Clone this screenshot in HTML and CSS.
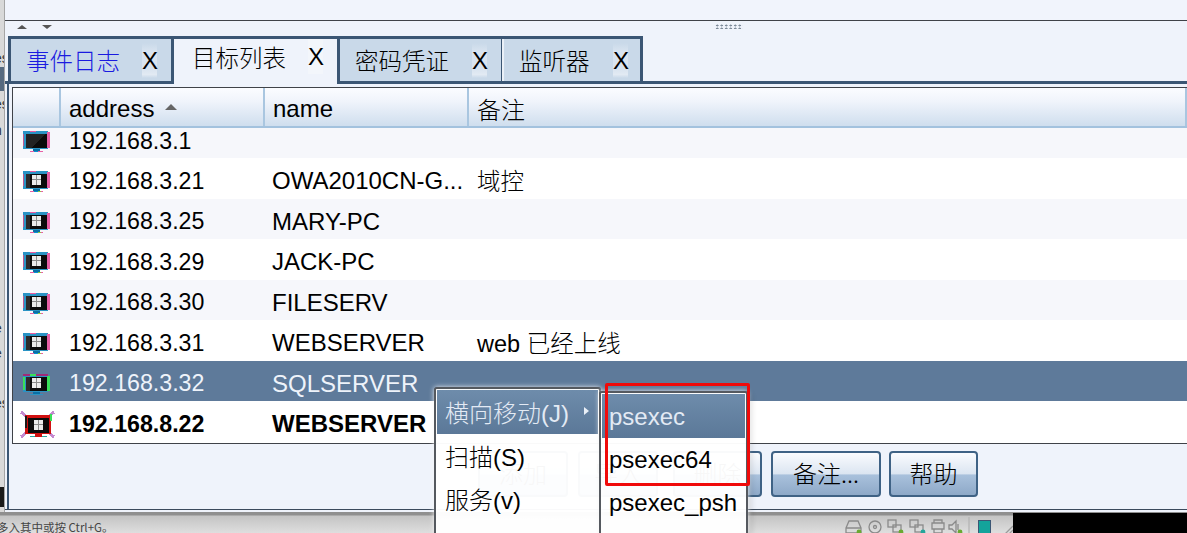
FILE: index.html
```html
<!DOCTYPE html>
<html lang="zh">
<head>
<meta charset="utf-8">
<title>目标列表</title>
<link rel="stylesheet" href="styles.css">
</head>
<body>
<svg class="defs" width="0" height="0" aria-hidden="true">
  <symbol id="pc" viewBox="0 0 28 22" shape-rendering="crispEdges">
    <rect x="0" y="0" width="25" height="18" fill="#2a93c4"/>
    <rect x="7" y="0" width="6" height="1" fill="#ea5aa0"/>
    <rect x="0" y="3" width="1" height="12" fill="#c0588f"/>
    <rect x="24" y="1" width="3" height="16" fill="#e85fa5"/>
    <rect x="3" y="3" width="21" height="14" fill="#0b0b0b"/>
    <rect x="3" y="3" width="4" height="14" fill="#2c2c2c"/>
    <rect x="9" y="4" width="9" height="10" fill="#ebebeb"/>
    <path d="M13 4h1v10h-1zM9 8h9v1H9z" fill="#8a8a8a"/>
    <rect x="10" y="18" width="7" height="2" fill="#0a6fa5"/>
    <rect x="7" y="20" width="13" height="1" fill="#e85fa5"/>
    <rect x="11" y="20" width="4" height="1" fill="#0a8fd0"/>
    <rect x="15" y="20" width="3" height="1" fill="#8fd03a"/>
  </symbol>
  <symbol id="pc-off" viewBox="0 0 28 22" shape-rendering="crispEdges">
    <rect x="0" y="0" width="25" height="18" fill="#2a93c4"/>
    <rect x="7" y="0" width="6" height="1" fill="#ea5aa0"/>
    <rect x="0" y="3" width="1" height="12" fill="#c0588f"/>
    <rect x="24" y="1" width="3" height="16" fill="#e85fa5"/>
    <rect x="3" y="3" width="21" height="14" fill="#0b0b0b"/>
    <path d="M8 17L24 3V17Z" fill="#0b0b0b"/>
    <path d="M3 3H22L8 17H3Z" fill="#222"/>
    <rect x="10" y="18" width="7" height="2" fill="#0a6fa5"/>
    <rect x="7" y="20" width="13" height="1" fill="#e85fa5"/>
    <rect x="11" y="20" width="4" height="1" fill="#0a8fd0"/>
  </symbol>
  <symbol id="pc-sel" viewBox="0 0 28 22" shape-rendering="crispEdges">
    <rect x="0" y="0" width="25" height="18" fill="#2a93c4"/>
    <rect x="0" y="0" width="7" height="2" fill="#a02a78"/>
    <rect x="7" y="0" width="6" height="2" fill="#39e05a"/>
    <rect x="13" y="0" width="12" height="2" fill="#a02a78"/>
    <rect x="0" y="3" width="2" height="13" fill="#39e05a"/>
    <rect x="24" y="2" width="3" height="15" fill="#39e05a"/>
    <rect x="3" y="3" width="21" height="14" fill="#0b0b0b"/>
    <rect x="3" y="3" width="4" height="14" fill="#2c2c2c"/>
    <rect x="9" y="4" width="9" height="10" fill="#ebebeb"/>
    <path d="M13 4h1v10h-1zM9 8h9v1H9z" fill="#8a8a8a"/>
    <rect x="10" y="18" width="7" height="2" fill="#0a6fa5"/>
    <rect x="7" y="20" width="13" height="1" fill="#2a93c4"/>
  </symbol>
  <symbol id="pc-dead" viewBox="0 0 35 27" shape-rendering="crispEdges">
    <path d="M1 1l7 6M34 1l-7 6M1 26l7-6M34 26l-7-6" stroke="#c58ad0" stroke-width="3"/>
    <rect x="5" y="4" width="26" height="19" fill="#d11010"/>
    <rect x="5" y="5" width="2" height="12" fill="#1a1a1a"/>
    <rect x="30" y="3" width="2" height="7" fill="#39e05a"/>
    <rect x="8" y="7" width="21" height="15" fill="#0b0b0b"/>
    <rect x="14" y="9" width="9" height="10" fill="#ebebeb"/>
    <path d="M18 9h1v10h-1zM14 13h9v1h-9z" fill="#8a8a8a"/>
    <rect x="15" y="22" width="7" height="3" fill="#d11010"/>
    <rect x="10" y="25" width="17" height="1" fill="#25a59a"/>
    <rect x="15" y="25" width="7" height="1" fill="#d11010"/>
  </symbol>
</svg>

<div class="screen">
  <aside class="backdrop-strip">
    <span class="strip-note s1">es</span>
    <span class="strip-sel"></span>
    <span class="strip-note s2">es</span>
    <span class="strip-note s3">n</span>
    <span class="strip-note s4">-</span>
    <span class="strip-note s5">e</span>
    <span class="strip-note s6">e</span>
    <span class="strip-note s7">es</span>
    <span class="strip-dark"></span>
  </aside>

  <main class="window">
    <div class="toolbar-band"></div>
    <div class="split-bar">
      <span class="arrow up"></span>
      <span class="arrow down"></span>
      <span class="grip"></span>
    </div>

    <div class="tabs">
      <div class="tab event"><span class="tab-label">事件日志</span><span class="tab-x">X</span></div>
      <div class="tab active"><span class="tab-label">目标列表</span><span class="tab-x">X</span></div>
      <div class="tab third"><span class="tab-label">密码凭证</span><span class="tab-x">X</span></div>
      <div class="tab last"><span class="tab-label">监听器</span><span class="tab-x">X</span></div>
    </div>

    <div class="pane">
      <div class="table">
        <div class="row head">
          <div class="c-icon"></div>
          <div class="c-addr">address<span class="sort"></span></div>
          <div class="c-name">name</div>
          <div class="c-note">备注</div>
        </div>
        <div class="row first alt">
          <div class="c-icon"><svg class="pc"><use href="#pc-off"/></svg></div>
          <div class="c-addr">192.168.3.1</div><div class="c-name"></div><div class="c-note"></div>
        </div>
        <div class="row">
          <div class="c-icon"><svg class="pc"><use href="#pc"/></svg></div>
          <div class="c-addr">192.168.3.21</div><div class="c-name">OWA2010CN-G...</div><div class="c-note">域控</div>
        </div>
        <div class="row alt">
          <div class="c-icon"><svg class="pc"><use href="#pc"/></svg></div>
          <div class="c-addr">192.168.3.25</div><div class="c-name">MARY-PC</div><div class="c-note"></div>
        </div>
        <div class="row">
          <div class="c-icon"><svg class="pc"><use href="#pc"/></svg></div>
          <div class="c-addr">192.168.3.29</div><div class="c-name">JACK-PC</div><div class="c-note"></div>
        </div>
        <div class="row alt">
          <div class="c-icon"><svg class="pc"><use href="#pc"/></svg></div>
          <div class="c-addr">192.168.3.30</div><div class="c-name">FILESERV</div><div class="c-note"></div>
        </div>
        <div class="row">
          <div class="c-icon"><svg class="pc"><use href="#pc"/></svg></div>
          <div class="c-addr">192.168.3.31</div><div class="c-name">WEBSERVER</div><div class="c-note">web 已经上线</div>
        </div>
        <div class="row selected">
          <div class="c-icon"><svg class="pc"><use href="#pc-sel"/></svg></div>
          <div class="c-addr">192.168.3.32</div><div class="c-name">SQLSERVER</div><div class="c-note"></div>
        </div>
        <div class="row bold">
          <div class="c-icon"><svg class="pc-dead"><use href="#pc-dead"/></svg></div>
          <div class="c-addr">192.168.8.22</div><div class="c-name">WEBSERVER</div><div class="c-note"></div>
        </div>
      </div>
      <div class="buttons">
        <button class="btn b-add">添加</button>
        <button class="btn b-imp">导入</button>
        <button class="btn b-del">删除</button>
        <button class="btn b-note">备注...</button>
        <button class="btn b-help">帮助</button>
      </div>
    </div>
  </main>

  <footer class="statusbar">
    <span class="status-text">多入其中或按 Ctrl+G。</span>
    <span class="tray">
      <svg class="tray-icons" width="170" height="21" viewBox="0 0 170 21" fill="none" stroke="#8a8a8a" stroke-width="1.3">
        <path d="M1 13l3-7h9l3 7v5H1zM1 13h15"/><circle cx="14" cy="17" r="2.4" fill="#6aa832" stroke="none"/>
        <circle cx="30" cy="12" r="6"/><circle cx="30" cy="12" r="1.5"/>
        <rect x="43" y="5" width="8" height="7"/><rect x="48" y="10" width="8" height="7"/><circle cx="56" cy="17" r="2.4" fill="#6aa832" stroke="none"/>
        <rect x="65" y="5" width="8" height="7"/><rect x="70" y="10" width="8" height="7"/><circle cx="78" cy="17" r="2.4" fill="#25a59a" stroke="none"/>
        <path d="M89 8V5h8v3M87 8h12v6H87zM89 14h8v4h-8z"/>
        <path d="M104 10h3l4-4v12l-4-4h-3zM113 9v6"/><circle cx="115" cy="17" r="2.4" fill="#6aa832" stroke="none"/>
        <path d="M124 2v19" stroke="#b4b4b4"/>
        <path d="M160 19l8-8M164 19l4-4" stroke="#9a9a9a"/>
      </svg>
      <span class="note-icon"></span>
    </span>
    <span class="black-end"></span>
  </footer>

  <div class="menu">
    <div class="menu-item on">横向移动(J)<span class="caret"></span></div>
    <div class="menu-item">扫描(S)</div>
    <div class="menu-item">服务(v)</div>
    <div class="menu-sep"></div>
  </div>
  <div class="menu sub">
    <div class="menu-item on">psexec</div>
    <div class="menu-item">psexec64</div>
    <div class="menu-item">psexec_psh</div>
  </div>
  <div class="redbox"></div>
</div>
</body>
</html>
```

FILE: styles.css
```css
* { box-sizing: border-box; }
html, body { margin: 0; padding: 0; height: 100%; overflow: hidden; }
body { font-family: "Liberation Sans", "Noto Sans CJK SC", sans-serif; color: #000; background: #a9a9a9; }
.defs { position: absolute; }

.screen { position: relative; width: 1187px; height: 533px; display: grid; grid-template-columns: 5px 1fr; grid-template-rows: 512px 21px; overflow: hidden; }

.backdrop-strip { position: relative; background: #d9d9d9; border-right: 1px solid #a5a5a5; overflow: hidden; font-size: 14px; color: #333; grid-row: 1; }
.strip-sel { position: absolute; left: 0; top: 67px; width: 5px; height: 24px; background: #56697f; }
.strip-note { position: absolute; left: -6px; }
.s1 { top: 50px; } .s2 { top: 96px; } .s3 { top: 122px; } .s4 { top: 145px; }
.s5 { top: 320px; } .s6 { top: 345px; } .s7 { top: 395px; }
.strip-dark { position: absolute; left: 0; top: 487px; width: 4px; height: 20px; background: #1a1a1a; }

.window { background: #eff3fb; display: flex; flex-direction: column; height: 512px; }
.toolbar-band { height: 20px; flex: none; background: #f1f4fc; }
.split-bar { height: 16px; flex: none; border-top: 1px solid #3f4248; position: relative; display: flex; gap: 15px; padding: 4px 0 0 12px; }
.arrow { width: 0; height: 0; border-left: 5px solid transparent; border-right: 5px solid transparent; }
.arrow.up { border-bottom: 4px solid #555; }
.arrow.down { border-top: 4px solid #555; }
.grip { position: absolute; left: 710px; top: 3px; width: 28px; height: 5px; background-image: radial-gradient(#7d8a99 45%, transparent 50%); background-size: 4.5px 3px; }

.tabs { display: flex; height: 48px; flex: none; padding-left: 3px; align-items: flex-start; border-bottom: 3px solid #3b5674; }
.tab { height: 45px; display: flex; align-items: center; font-size: 23.5px; background: #c9d9e9; border-top: 3px solid #3b5674; border-left: 3px solid #3b5674; border-right: 2px solid #3b5674; padding: 0 0 0 15px; }
.tab.event { width: 166px; color: #1a1ae0; border-right: 3px solid #3b5674; }
.tab.active { height: 48px; background: #eff3fb; border-left: 0; width: 163px; padding: 0 0 10px 18px; border-right: 0; }
.tab.third { width: 165px; border-right: 1px solid #3b5674; }
.tab.last { width: 141px; border-left: 0; border-right: 3px solid #3b5674; padding-left: 17px; box-shadow: inset 2px 0 #eaf0f7; }
.tab-label { font-weight: 300; white-space: nowrap; width: 116px; flex: none; }
.tab.third .tab-label { width: 117px; }
.tab.last .tab-label { width: 94px; }
.tab-x { font-size: 24px; width: 15px; height: 35px; line-height: 35px; text-align: center; flex: none; color: #000; background: linear-gradient(#c9d9e9, #d9e4f0 25%, #d9e4f0 75%, #e2eaf3 90%, #c9d9e9); }
.tab.active .tab-x { background: #f3f6fb; }

.pane { flex: none; height: 426px; padding: 3px 0 0 7px; display: flex; flex-direction: column; border-bottom: 1px solid #3b4a5c; position: relative; }
.pane::before { content: ""; position: absolute; left: 2px; top: -3px; bottom: 0; width: 2px; background: #3b5674; }

.table { height: 357px; flex: none; border: 1px solid #3f4248; border-right: 0; background: #fff; overflow: hidden; font-size: 23.5px; }
.row { display: grid; grid-template-columns: 48px 204px 204px 1fr; height: 40.5px; align-items: center; background: #fff; }
.row > div { padding-top: 6px; }
.row > .c-note { padding-top: 3px; }
.row.alt { background: #f6f7fb; }
.row.head { height: 40px; background: linear-gradient(#fbfcff, #f0f4fb 35%, #cfdeee); border-bottom: 2px solid #a3c2de; font-size: 24px; align-items: stretch; }
.row.head > div { display: flex; align-items: center; padding: 3px 0 0 8px; border-right: 2px solid #a9c6e0; }
.row.first { height: 30px; }
.row.first > div { padding-top: 0; }
.row.first .c-addr { margin-top: -4px; }
.row.first .c-icon { margin-top: -3px; }
.row.selected { background: #5e7a9a; color: #eef3fa; }
.row.bold { font-weight: 700; }
.row .c-icon { display: flex; justify-content: center; padding-top: 8px; }
.row.bold .c-icon { padding-top: 6px; }
.row.first .c-icon { padding-top: 0; }
.c-addr { padding-left: 8px; font-size: 23.2px; }
.row.head .c-addr { font-size: 24px; }
.c-name { padding-left: 7px; white-space: nowrap; font-size: 24px; }
.c-note { padding-left: 8px; white-space: nowrap; font-weight: 300; }
.pc { width: 28px; height: 22px; display: block; }
.pc-dead { width: 35px; height: 27px; display: block; }
.sort { display: inline-block; width: 0; height: 0; margin: 0 0 3px 11px; border-left: 6px solid transparent; border-right: 6px solid transparent; border-bottom: 6px solid #666; }

.buttons { display: flex; padding: 7px 0 0 466px; flex: none; }
.btn { height: 46px; flex: none; font: 300 24px/40px "Noto Sans CJK SC", sans-serif; color: #000; padding: 0 0 2px; border: 2px solid #3f6285; border-radius: 4px; background: linear-gradient(#fafbfe, #dbe5f1 50%, #a9c1dc 52%, #8ea9c8); }
.b-add { width: 90px; margin-right: 10px; }
.b-imp { width: 80px; margin-right: 15px; }
.b-del { width: 89px; margin-right: 9px; }
.b-note { width: 110px; margin-right: 8px; }
.b-help { width: 89px; }

.statusbar { grid-column: 1 / -1; grid-row: 2; background: linear-gradient(#8f8f8f 0 3px, #c4c4c4 4px, #dedede); position: relative; display: flex; align-items: center; font: 11.5px "Noto Sans CJK SC", sans-serif; color: #444; }
.status-text { margin-left: -3px; margin-top: 8px; white-space: nowrap; }
.tray { position: absolute; left: 845px; top: 3px; display: flex; }
.tray-icons { display: block; }
.note-icon { position: absolute; left: 133px; top: 5px; width: 13px; height: 16px; background: #14a39b; border: 1px solid #3b5674; }
.black-end { position: absolute; left: 1013px; top: 1px; right: 0; bottom: 0; background: #000; }

.menu { position: absolute; left: 434px; top: 387px; width: 167px; height: 146px; background: rgba(255,255,255,.97); border: 2px solid #55595f; border-bottom: 0; border-radius: 3px 3px 0 0; padding: 1px 0 0 1px; font: 300 24px "Liberation Sans", "Noto Sans CJK SC", sans-serif; box-shadow: 0 0 5px rgba(255,255,255,.9), 3px 3px 6px rgba(0,0,0,.15); }
.menu.sub { left: 599px; top: 391px; width: 149px; height: 142px; z-index: 1; }
.menu-item { height: 43px; padding-left: 8px; display: flex; align-items: center; position: relative; white-space: nowrap; }
.menu-item.on { height: 44px; padding-bottom: 2px; background: linear-gradient(#6e8cab, #5b7898); color: #e3eaf4; margin-right: 1px; }
.sub .menu-item { padding-left: 7px; }
.sub .menu-item.on { padding-bottom: 0; padding-top: 2px; }
.caret { position: absolute; left: 147px; top: 17px; border-left: 5px solid #e9eff7; border-top: 4px solid transparent; border-bottom: 4px solid transparent; }
.menu-sep { height: 3px; margin: 14px 0 0; background: #b5b5b5; }
.redbox { position: absolute; left: 605px; top: 383px; width: 145px; height: 103px; border: 3px solid #f00a0a; border-radius: 2px; z-index: 2; }
```
